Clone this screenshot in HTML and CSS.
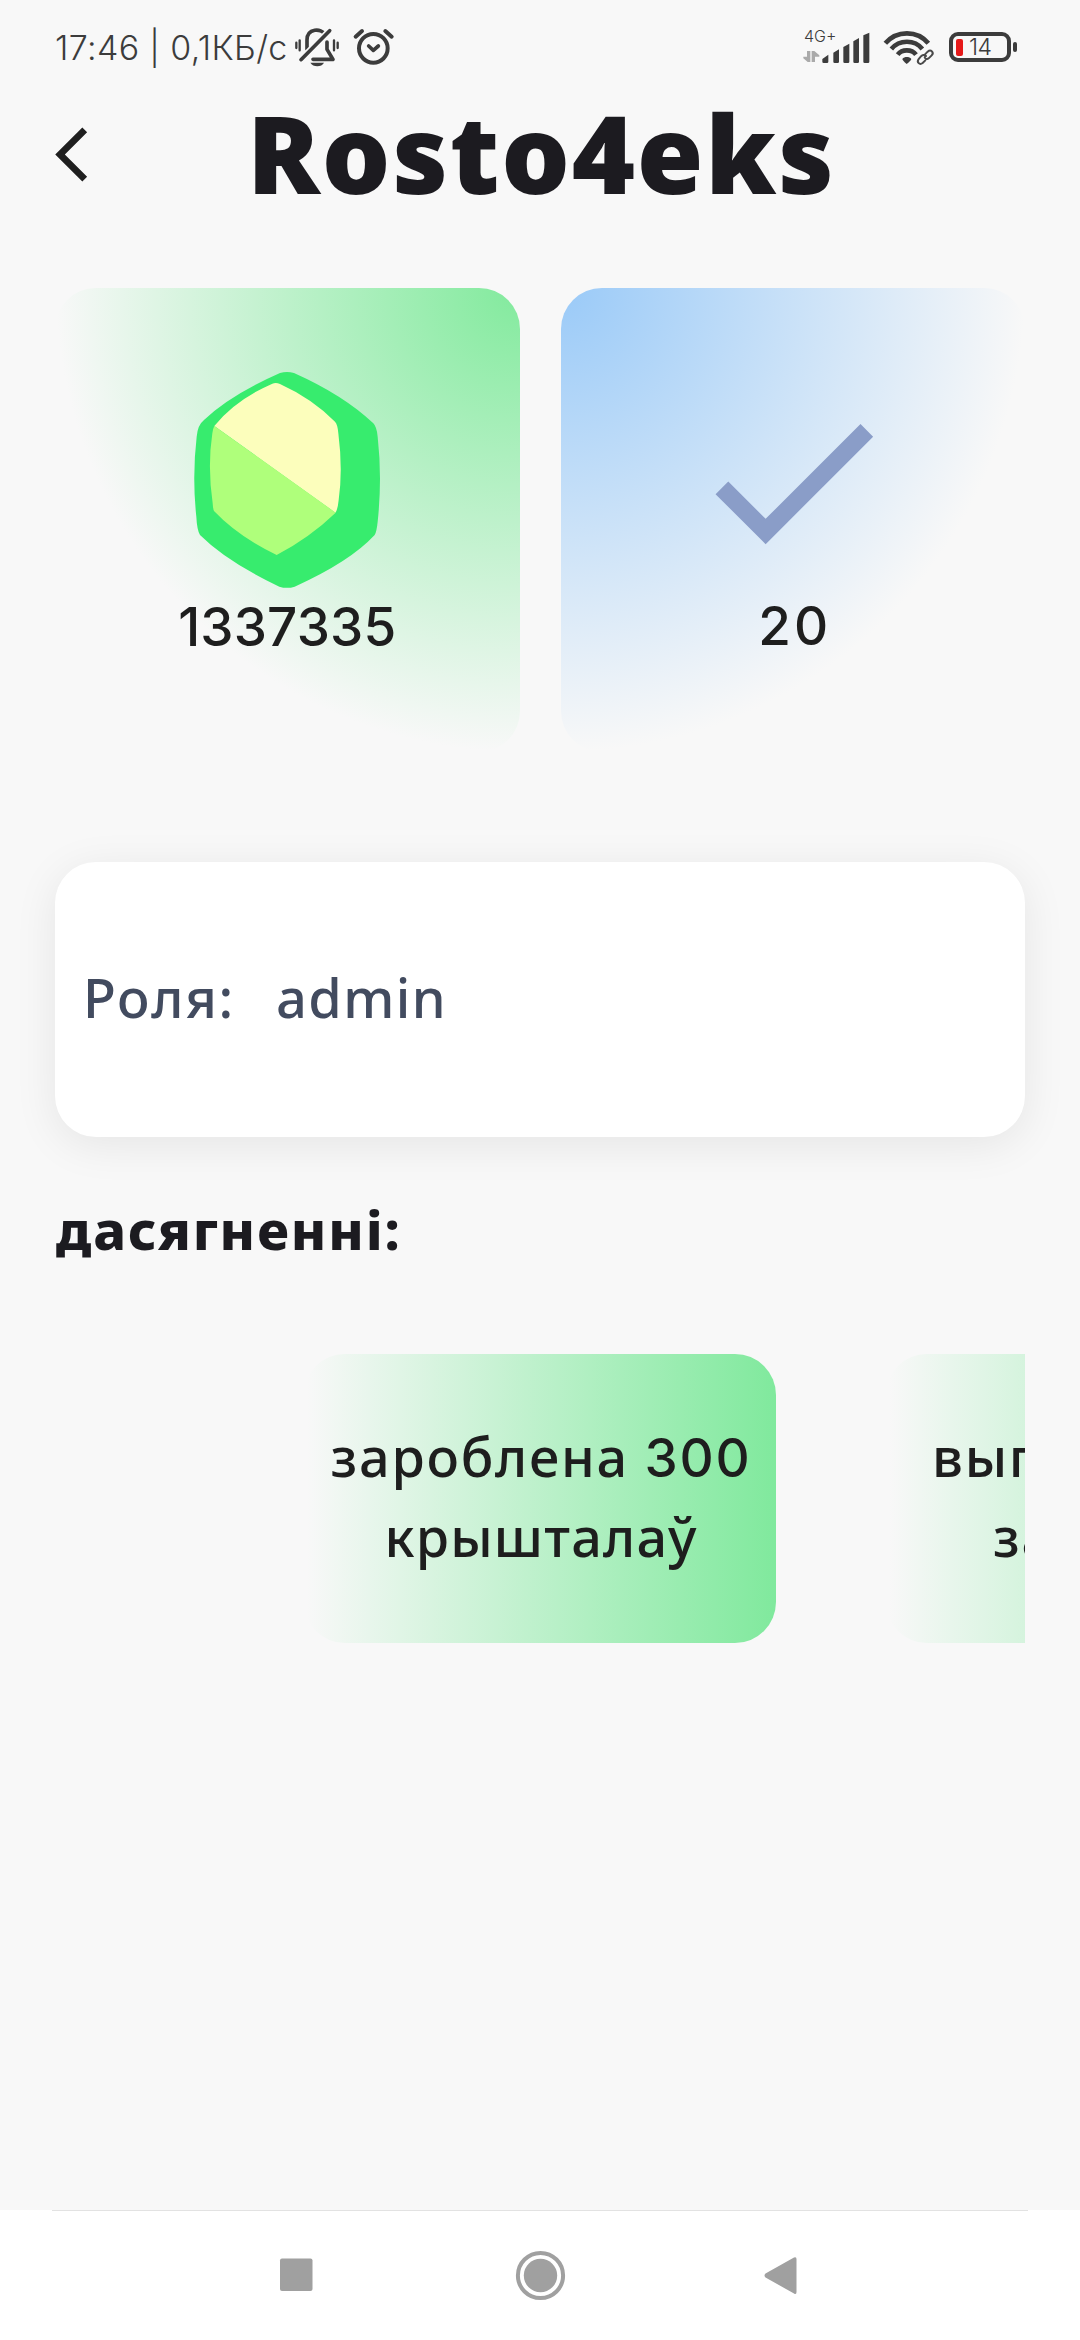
FILE: index.html
```html
<!DOCTYPE html>
<html lang="be">
<head>
<meta charset="utf-8">
<title>Rosto4eks</title>
<link rel="stylesheet" href="styles.css">
</head>
<body>
<div class="status-bar">
  <span class="clock">17:46 | 0,1КБ/с</span>
  <svg class="icon-alerts" viewBox="0 0 360 165" fill="none" stroke="#3c3c3c" stroke-width="9" stroke-linecap="round">
    <path d="M34 68V84M44 61V91M147 61V91M158 68V84" stroke-width="7"/>
    <path d="M66 88V60C66 24 110 24 119 43M126 66V88L144 118H84" stroke-width="11" stroke-linejoin="round"/>
    <path d="M48 119L134 32" stroke="#f8f8f8" stroke-width="20"/>
    <path d="M48 119L134 32" stroke-width="11"/>
    <path d="M76 128H117C110 142 84 142 76 128Z" fill="#3c3c3c" stroke="none"/>
    <circle cx="265" cy="85" r="43" stroke-width="12"/>
    <path d="M251 78L265 91L280 78" stroke-width="11" stroke-linejoin="round"/>
    <path d="M212 50L231 33M301 33L320 50" stroke-width="12"/>
  </svg>
  <div class="signal">
    <span class="network">4G+</span>
    <svg viewBox="0 0 435 150" fill="#3c3c3c">
      <path fill="#aaa" d="M36 93H46V126H38L25 115V110H36ZM50 126V93H58L73 106V110H60V126Z"/>
      <path d="M82 125V117L100 104V125Q100 129 96 129H86Q82 129 82 125ZM115 125V98L132 88V125Q132 129 128 129H119Q115 129 115 125ZM145 125V81L163 71V125Q163 129 159 129H149Q145 129 145 125ZM175 125V64L192 54V125Q192 129 188 129H179Q175 129 175 125ZM205 125V46L223 38V125Q223 129 219 129H209Q205 129 205 125Z"/>
      <g fill="none" stroke="#3c3c3c" stroke-width="14">
        <path d="M271 70C305 30 367 30 400 70"/>
        <path d="M289 87C313 58 359 58 382 87"/>
        <path d="M308 104C321 87 350 87 363 104"/>
      </g>
      <path d="M322 117C328 109 343 109 349 117Q348 122 335 132Q323 122 322 117Z"/>
      <g fill="none" stroke-linecap="round">
        <path d="M392 103L400 95C410 87 418 99 410 106L401 115C396 119 390 116 390 112M391 108C385 104 379 107 376 111L371 117C364 127 374 136 383 129L391 121" stroke="#f8f8f8" stroke-width="13"/>
        <path d="M390 103L398 95C408 86 418 98 410 106L401 115C396 119 390 116 389 112M393 108C388 103 381 105 377 110L371 117C364 127 374 136 383 129L391 121" stroke="#4a4a4a" stroke-width="6"/>
      </g>
    </svg>
  </div>
  <div class="battery"><i class="charge"></i><span>14</span></div>
</div>

<header class="header">
  <svg class="back" viewBox="0 0 24 24" fill="#1f1f1f"><path d="M17.77 3.77L16 2 6 12l10 10 1.77-1.77L9.54 12z"/></svg>
  <h1>Rosto4eks</h1>
</header>

<main class="content">
  <section class="stats">
    <div class="stat stat-crystals">
      <svg class="crystal" viewBox="462 306 558 648">
        <path fill="#37ec6e" d="M720 309Q741 303 762 309Q910 375 1000 460Q1010 470 1013 500Q1027 625 1013 755Q1010 785 1004 795Q930 875 764 950Q741 957 718 950Q560 875 480 795Q471 780 469 740Q456 620 470 500Q473 465 492 450Q570 375 720 309Z"/>
        <path fill="#fcfebc" d="M523 468Q585 390 697 341Q708 337 720 342Q815 385 885 455Q893 463 895 490Q909 600 896 690Q893 720 886 728Z"/>
        <path fill="#afff7b" d="M523 468L887 728Q810 802 710 855Q595 800 522 723Q519 718 518 700Q502 590 517 490Q519 475 523 468Z"/>
      </svg>
      <span class="value">1337335</span>
    </div>
    <div class="stat stat-tasks">
      <svg class="check" viewBox="0 0 24 24" fill="#8a9dc8"><path d="M9 16.17L4.83 12l-1.42 1.41L9 19 21 7l-1.41-1.41z"/></svg>
      <span class="value value-short">20</span>
    </div>
  </section>

  <section class="role">
    <span class="role-label">Роля:</span>
    <span class="role-name">admin</span>
  </section>

  <h2>дасягненні:</h2>

  <section class="achievements">
    <div class="achievement">зароблена <span class="digits">300</span><br><span class="tight">крышталаў</span></div>
    <div class="achievement achievement-next"><span>вып</span><span class="indent">за</span></div>
  </section>
</main>

<nav class="navigation">
  <svg viewBox="0 0 1080 130" fill="#a0a0a0">
    <rect x="280" y="48.500" width="32.500" height="32.500" rx="2"/>
    <circle cx="540.500" cy="65.500" r="22.600" fill="none" stroke="#a0a0a0" stroke-width="4"/>
    <circle cx="540.500" cy="65.500" r="16.700"/>
    <path d="M765.500 63.500L794 47.500Q796.500 46.500 796.500 49V82Q796.500 85 794 83.500L765.500 67.500Q763.500 65.500 765.500 63.500Z"/>
  </svg>
</nav>
</body>
</html>
```

FILE: styles.css
```css
* {
  box-sizing: border-box;
  margin: 0;
}

body {
  display: flex;
  flex-direction: column;
  width: 1080px;
  height: 2340px;
  overflow: hidden;
  background: #f8f8f8;
  color: #1e1e1e;
  font: 500 54px/80px "Noto Sans", sans-serif;
}

svg {
  display: block;
  flex: none;
}

.status-bar {
  display: flex;
  align-items: flex-start;
  height: 96px;
  padding: 20px 62px 0 55px;
  color: #3c3c3c;
  font-family: Inter, "Noto Sans", sans-serif;
  font-weight: 350;
}

.clock {
  width: 230px;
  padding-top: 8px;
  font-size: 34px;
  line-height: 40px;
  letter-spacing: 0.35px;
  white-space: nowrap;
}

.icon-alerts {
  width: 120px;
  height: 55px;
}

.signal {
  position: relative;
  margin-left: 390px;
}

.signal svg {
  width: 145px;
  height: 50px;
}

.network {
  position: absolute;
  left: 9px;
  top: 6px;
  font-size: 16px;
  line-height: 20px;
}

.battery {
  position: relative;
  display: flex;
  align-items: center;
  width: 62px;
  height: 30px;
  margin: 12px 0 0 9px;
  padding-left: 3px;
  border: 4px solid #3c3c3c;
  border-radius: 9px;
  font-size: 23px;
  line-height: 22px;
}

.battery::after {
  content: "";
  position: absolute;
  left: 60px;
  top: 6px;
  width: 4px;
  height: 10px;
  border-radius: 2px;
  background: #3c3c3c;
}

.battery span {
  margin-left: 6px;
  letter-spacing: -0.5px;
}

.charge {
  width: 7px;
  height: 17px;
  border-radius: 2px;
  background: #e61919;
}

.header {
  display: flex;
  align-items: center;
  height: 120px;
  padding-left: 39px;
}

.back {
  width: 65px;
  height: 65px;
  margin-top: -4px;
}

h1 {
  margin: -6px 0 0 143px;
  color: #1c1b20;
  font-size: 108px;
  font-weight: 900;
  line-height: 120px;
  letter-spacing: 1.7px;
}

.content {
  padding: 72px 55px 0;
}

.stats {
  display: grid;
  grid-template-columns: 1fr 1fr;
  gap: 41px;
}

.stat {
  display: flex;
  flex-direction: column;
  align-items: center;
  height: 464px;
  border-radius: 41px;
}

.stat-crystals {
  padding-top: 84px;
  background: radial-gradient(circle 464px at top right, #82ea9d, #f8f8f8);
}

.stat-tasks {
  padding-top: 86px;
  background: radial-gradient(circle 464px at top left, #9acaf8, #f8f8f8);
}

.crystal {
  width: 186px;
  height: 216px;
}

.check {
  width: 215px;
  height: 215px;
}

.value {
  margin-top: -1px;
  font-family: Inter, "Noto Sans", sans-serif;
  font-size: 53px;
  letter-spacing: 0.15px;
}

.value-short {
  margin-top: -3px;
  padding-left: 4px;
  letter-spacing: 3px;
}

.role {
  display: flex;
  align-items: center;
  gap: 41px;
  height: 275px;
  margin-top: 110px;
  padding: 0 28px 6px;
  border-radius: 41px;
  background: #fff;
  box-shadow: 0 8px 44px rgba(0, 0, 0, 0.08);
  color: #424b5f;
}

.role-label {
  letter-spacing: 1.7px;
}

.role-name {
  letter-spacing: 1.4px;
}

h2 {
  margin-top: 52px;
  padding-left: 1px;
  color: #1c1b20;
  font-size: 54px;
  font-weight: 800;
  line-height: 80px;
  letter-spacing: 1.8px;
}

.achievements {
  display: flex;
  gap: 110px;
  margin-top: 85px;
  padding-left: 249px;
  overflow: hidden;
}

.achievement {
  flex: none;
  width: 472px;
  height: 289px;
  padding: 62px 0 0 2px;
  border-radius: 41px;
  background: linear-gradient(to right, #f8f8f8 3px, #80e99d);
  letter-spacing: 1.7px;
  text-align: center;
  white-space: nowrap;
}

.digits {
  font-family: Inter, "Noto Sans", sans-serif;
  font-size: 53px;
  line-height: 1;
}

.tight {
  letter-spacing: 1.2px;
}

.achievement-next {
  padding-left: 46px;
  text-align: left;
}

.achievement-next span {
  display: block;
}

.achievement-next .indent {
  padding-left: 61px;
}

.navigation {
  position: relative;
  height: 130px;
  margin-top: auto;
  background: #fff;
}

.navigation::before {
  content: "";
  position: absolute;
  left: 52px;
  right: 52px;
  top: 0;
  height: 1px;
  background: #e2e2e2;
}

.navigation svg {
  width: 1080px;
  height: 130px;
}
```
